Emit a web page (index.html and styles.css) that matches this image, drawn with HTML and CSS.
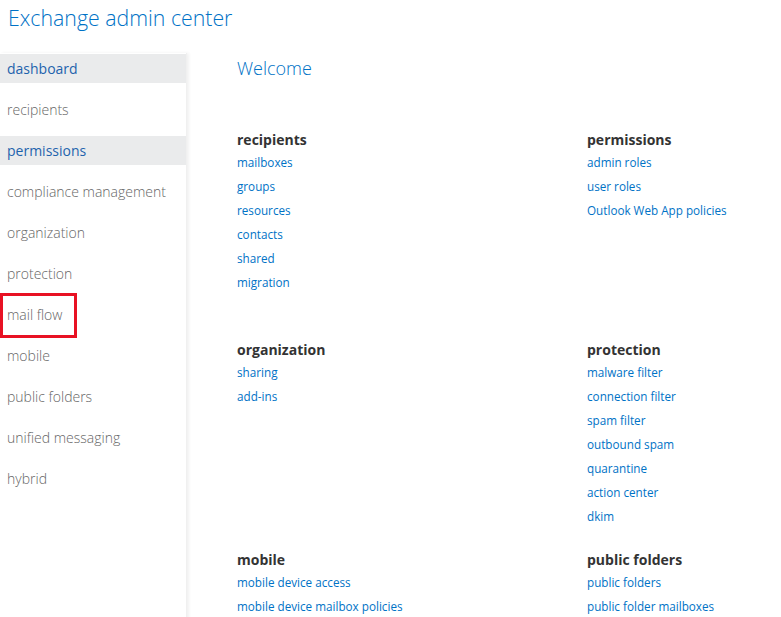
FILE: index.html
```html
<!DOCTYPE html>
<html lang="en">
<head>
  <meta charset="UTF-8">
  <meta name="viewport" content="width=device-width, initial-scale=1.0">
  <title>Exchange admin center</title>
  <link rel="stylesheet" href="styles.css">
</head>
<body>
  <header class="top-bar">
    <h1>Exchange admin center</h1>
  </header>

  <div class="layout">
    <nav class="sidebar">
      <div class="nav-item active">dashboard</div>
      <div class="nav-item">recipients</div>
      <div class="nav-item active">permissions</div>
      <div class="nav-item">compliance management</div>
      <div class="nav-item">organization</div>
      <div class="nav-item">protection</div>
      <div class="nav-item marked">mail flow</div>
      <div class="nav-item">mobile</div>
      <div class="nav-item">public folders</div>
      <div class="nav-item">unified messaging</div>
      <div class="nav-item">hybrid</div>
    </nav>

    <main class="content">
      <h2 class="welcome">Welcome</h2>

      <div class="sections">
        <div class="section">
          <h3>recipients</h3>
          <a href="#">mailboxes</a>
          <a href="#">groups</a>
          <a href="#">resources</a>
          <a href="#">contacts</a>
          <a href="#">shared</a>
          <a href="#">migration</a>
        </div>
        <div class="section">
          <h3>permissions</h3>
          <a href="#">admin roles</a>
          <a href="#">user roles</a>
          <a href="#">Outlook Web App policies</a>
        </div>
        <div class="section">
          <h3>organization</h3>
          <a href="#">sharing</a>
          <a href="#">add-ins</a>
        </div>
        <div class="section">
          <h3>protection</h3>
          <a href="#">malware filter</a>
          <a href="#">connection filter</a>
          <a href="#">spam filter</a>
          <a href="#">outbound spam</a>
          <a href="#">quarantine</a>
          <a href="#">action center</a>
          <a href="#">dkim</a>
        </div>
        <div class="section">
          <h3>mobile</h3>
          <a href="#">mobile device access</a>
          <a href="#">mobile device mailbox policies</a>
        </div>
        <div class="section">
          <h3>public folders</h3>
          <a href="#">public folders</a>
          <a href="#">public folder mailboxes</a>
        </div>
      </div>
    </main>
  </div>
</body>
</html>
```

FILE: styles.css
```css
body {
  font-family: "Segoe UI", "Open Sans", "Noto Sans", sans-serif;
  margin: 0;
  padding: 0;
  background-color: #fff;
  overflow: hidden;
}

.top-bar {
  height: 53px;
  padding: 0 8px;
  box-sizing: border-box;
}

.top-bar h1 {
  margin: 0;
  padding-top: 3px;
  font-size: 21.3px;
  font-weight: 300;
  line-height: 30px;
  color: #0072c6;
}

.layout {
  display: flex;
}

.sidebar {
  width: 186px;
  min-height: 600px;
  flex-shrink: 0;
  padding-top: 1px;
  box-shadow: 2px 0 3px rgba(0, 0, 0, 0.06);
  border-right: 1px solid #f0f0f0;
}

.nav-item {
  position: relative;
  height: 29px;
  line-height: 30px;
  margin-bottom: 12px;
  padding: 0 7px;
  font-size: 14px;
  font-weight: 300;
  color: #666;
  white-space: nowrap;
}

.nav-item.active {
  background-color: #eaebec;
  color: #1e63ad;
  font-weight: 400;
}

/* рамка-виділення навколо пункту */
.nav-item.marked::after {
  content: "";
  position: absolute;
  left: 0;
  top: -7px;
  width: 77px;
  height: 45px;
  border: 3px solid #e81123;
  box-sizing: border-box;
}

.content {
  flex: 1;
  padding-left: 50px;
}

.welcome {
  margin: 0 0 48px;
  height: 30px;
  line-height: 30px;
  font-size: 18px;
  font-weight: 300;
  color: #0072c6;
}

.sections {
  display: grid;
  grid-template-columns: 350px 1fr;
  grid-auto-rows: 210px;
}

.section h3 {
  margin: 0 0 1px;
  font-size: 14px;
  font-weight: 700;
  line-height: 18px;
  color: #333;
}

.section a {
  display: block;
  line-height: 24px;
  font-size: 11.7px;
  color: #0072c6;
  text-decoration: none;
  white-space: nowrap;
}
```
